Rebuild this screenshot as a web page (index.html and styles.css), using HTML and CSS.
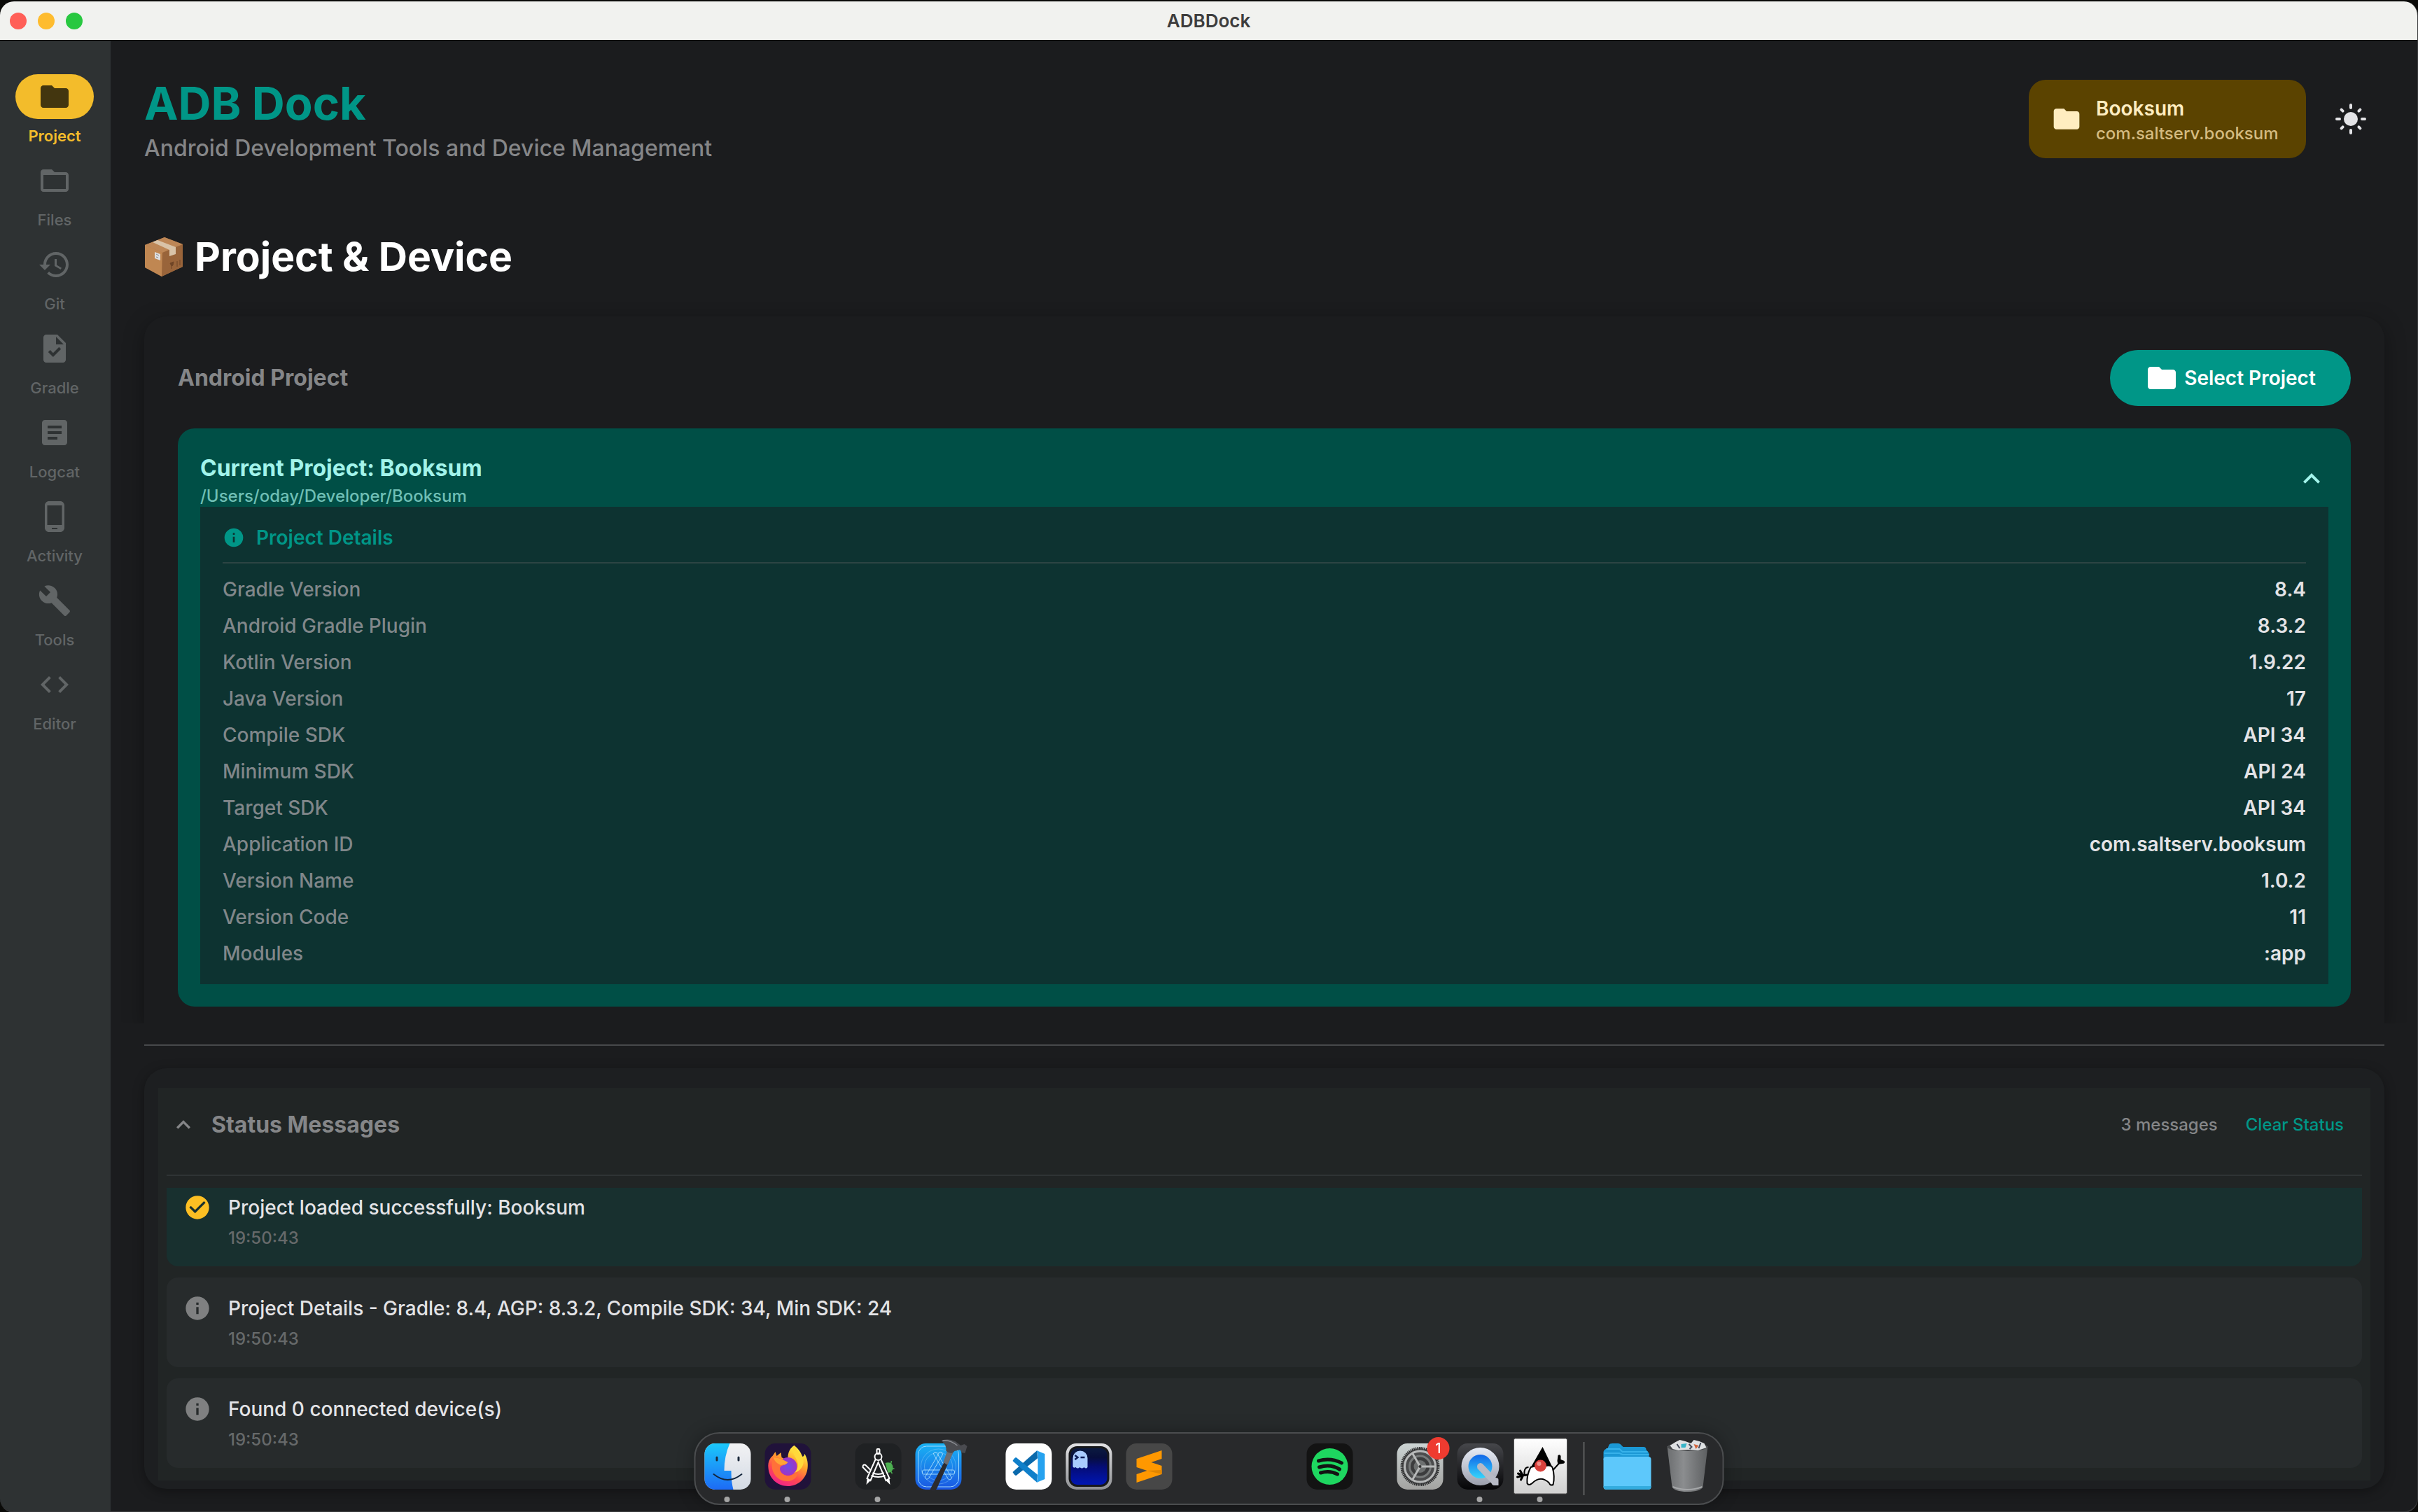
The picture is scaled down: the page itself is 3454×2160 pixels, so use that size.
FILE: index.html
```html
<!DOCTYPE html>
<html lang="en">
<head>
  <meta charset="UTF-8">
  <meta name="viewport" content="width=device-width, initial-scale=1.0">
  <title>ADBDock</title>
  <link rel="stylesheet" href="styles.css">
</head>
<body>

<svg class="sprite" aria-hidden="true">
  <symbol id="folder" viewBox="0 0 24 24"><path d="M10 4H4c-1.1 0-2 .9-2 2v12c0 1.100.9 2 2 2h16c1.100 0 2-.9 2-2V8c0-1.100-.9-2-2-2h-8l-2-2z"/></symbol>
  <symbol id="folder-open" viewBox="0 0 24 24"><path d="M20 6h-8l-2-2H4c-1.100 0-2 .9-2 2v12c0 1.100.9 2 2 2h16c1.100 0 2-.9 2-2V8c0-1.100-.9-2-2-2zm0 12H4V8h16v10z"/></symbol>
  <symbol id="history" viewBox="0 0 24 24"><path d="M13 3c-4.970 0-9 4.030-9 9H1l3.890 3.890.07.14L9 12H6c0-3.870 3.130-7 7-7s7 3.130 7 7-3.130 7-7 7c-1.930 0-3.680-.79-4.940-2.060l-1.420 1.420C8.270 19.990 10.510 21 13 21c4.970 0 9-4.030 9-9s-4.030-9-9-9zm-1 5v5l4.280 2.540.72-1.210-3.500-2.080V8H12z"/></symbol>
  <symbol id="task" viewBox="0 0 24 24"><path d="M14 2H6c-1.100 0-2 .9-2 2v16c0 1.100.89 2 1.990 2H18c1.100 0 2-.9 2-2V8l-6-6zm-3.060 16L7.400 14.460l1.410-1.410 2.120 2.120 4.240-4.240 1.410 1.410L10.940 18zM13 9V3.500L18.500 9H13z"/></symbol>
  <symbol id="article" viewBox="0 0 24 24"><path d="M19 3H5c-1.100 0-2 .9-2 2v14c0 1.100.9 2 2 2h14c1.100 0 2-.9 2-2V5c0-1.100-.9-2-2-2zm-5 14H7v-2h7v2zm3-4H7v-2h10v2zm0-4H7V7h10v2z"/></symbol>
  <symbol id="phone" viewBox="0 0 24 24"><path d="M16 1H8C6.340 1 5 2.340 5 4v16c0 1.660 1.340 3 3 3h8c1.660 0 3-1.340 3-3V4c0-1.660-1.340-3-3-3zm-2 20h-4v-1h4v1zm3.250-3H6.750V4h10.500v14z"/></symbol>
  <symbol id="build" viewBox="0 0 24 24"><path d="M22.700 19l-9.100-9.100c.9-2.300.4-5-1.500-6.900-2-2-5-2.400-7.400-1.300L9 6 6 9 1.600 4.700C.4 7.100.9 10.100 2.900 12.100c1.900 1.900 4.600 2.400 6.900 1.500l9.100 9.100c.4.4 1 .4 1.400 0l2.300-2.300c.5-.4.5-1.100.1-1.400z"/></symbol>
  <symbol id="code" viewBox="0 0 24 24"><path d="M9.400 16.600L4.800 12l4.600-4.600L8 6l-6 6 6 6 1.400-1.400zm5.200 0l4.600-4.600-4.600-4.600L16 6l6 6-6 6-1.400-1.400z"/></symbol>
  <symbol id="info" viewBox="0 0 24 24"><path d="M12 2C6.480 2 2 6.480 2 12s4.480 10 10 10 10-4.480 10-10S17.520 2 12 2zm1 15h-2v-6h2v6zm0-8h-2V7h2v2z"/></symbol>
  <symbol id="check" viewBox="0 0 24 24"><path d="M12 2C6.480 2 2 6.480 2 12s4.480 10 10 10 10-4.480 10-10S17.520 2 12 2zm-2 15l-5-5 1.410-1.410L10 14.170l7.590-7.590L19 8l-9 9z"/></symbol>
  <symbol id="expand-less" viewBox="0 0 24 24"><path d="M12 8l-6 6 1.410 1.410L12 10.830l4.590 4.580L18 14z"/></symbol>
  <symbol id="light-mode" viewBox="0 0 24 24"><circle cx="12" cy="12" r="5"/><path d="M12 2v2M12 20v2M2 12h2M20 12h2M5.300 5.300l1 1M17.700 17.700l1 1M5.300 18.700l1-1M17.700 6.300l1-1" fill="none" stroke="currentColor" stroke-width="2" stroke-linecap="round"/></symbol>
</svg>

<div class="window">
  <div class="titlebar">
    <div class="lights">
      <span class="light close"></span>
      <span class="light minimize"></span>
      <span class="light zoom"></span>
    </div>
    <span class="window-title">ADBDock</span>
  </div>

  <div class="app">
    <nav class="sidebar">
      <button class="nav-item active"><span class="pill"><svg class="icon"><use href="#folder"/></svg></span>Project</button>
      <button class="nav-item"><span class="pill"><svg class="icon"><use href="#folder-open"/></svg></span>Files</button>
      <button class="nav-item"><span class="pill"><svg class="icon"><use href="#history"/></svg></span>Git</button>
      <button class="nav-item"><span class="pill"><svg class="icon"><use href="#task"/></svg></span>Gradle</button>
      <button class="nav-item"><span class="pill"><svg class="icon"><use href="#article"/></svg></span>Logcat</button>
      <button class="nav-item"><span class="pill"><svg class="icon"><use href="#phone"/></svg></span>Activity</button>
      <button class="nav-item"><span class="pill"><svg class="icon"><use href="#build"/></svg></span>Tools</button>
      <button class="nav-item"><span class="pill"><svg class="icon"><use href="#code"/></svg></span>Editor</button>
    </nav>

    <main>
      <header class="header">
        <div>
          <h1>ADB Dock</h1>
          <p class="tagline">Android Development Tools and Device Management</p>
        </div>
        <div class="header-right">
          <div class="project-chip">
            <svg class="icon chip-icon"><use href="#folder"/></svg>
            <div>
              <p class="chip-name">Booksum</p>
              <p class="chip-id">com.saltserv.booksum</p>
            </div>
          </div>
          <button class="theme-toggle" aria-label="Toggle theme"><svg class="icon"><use href="#light-mode"/></svg></button>
        </div>
      </header>

      <h2>
        <svg class="box" viewBox="0 0 56 56" aria-hidden="true">
          <path d="M1 11 29 0 55 10 55 42 25 56 1 43z" fill="#b07a4a"/>
          <path d="M1 11 29 0 55 10 26 22z" fill="#bd8656"/>
          <path d="M1 11 26 22 25 56 1 43z" fill="#c08752"/>
          <path d="M26 22 55 10 55 42 25 56z" fill="#99643a"/>
          <path d="M12 7 19 4 45 14 45 24 36 27 36 18z" fill="#d9c3a8"/>
          <path d="M15 21 23 24 23 33 15 30z" fill="#dedede"/>
          <path d="M17 24 21 26M17 28 20 29" stroke="#8a8a8a"/>
          <path d="M37 37 42 35 41 40 39 41zM39 41V45M47 34V42M51 32V40" fill="#6f4526" stroke="#6f4526"/>
        </svg>
        Project &amp; Device
      </h2>

      <section class="card">
        <div class="card-header">
          <h3>Android Project</h3>
          <button class="select-btn"><svg class="icon"><use href="#folder"/></svg>Select Project</button>
        </div>

        <div class="current">
          <div class="current-header">
            <div>
              <h4>Current Project: Booksum</h4>
              <p class="path">/Users/oday/Developer/Booksum</p>
            </div>
            <button class="collapse" aria-label="Collapse"><svg class="icon"><use href="#expand-less"/></svg></button>
          </div>
          <div class="details">
            <h5><svg class="icon info-icon"><use href="#info"/></svg>Project Details</h5>
            <dl>
              <div><dt>Gradle Version</dt><dd>8.4</dd></div>
              <div><dt>Android Gradle Plugin</dt><dd>8.3.2</dd></div>
              <div><dt>Kotlin Version</dt><dd>1.9.22</dd></div>
              <div><dt>Java Version</dt><dd>17</dd></div>
              <div><dt>Compile SDK</dt><dd>API 34</dd></div>
              <div><dt>Minimum SDK</dt><dd>API 24</dd></div>
              <div><dt>Target SDK</dt><dd>API 34</dd></div>
              <div><dt>Application ID</dt><dd>com.saltserv.booksum</dd></div>
              <div><dt>Version Name</dt><dd>1.0.2</dd></div>
              <div><dt>Version Code</dt><dd>11</dd></div>
              <div><dt>Modules</dt><dd>:app</dd></div>
            </dl>
          </div>
        </div>
      </section>

      <hr>

      <section class="status">
        <div class="status-panel">
          <div class="status-header">
            <button class="status-toggle"><svg class="icon chevron"><use href="#expand-less"/></svg>Status Messages</button>
            <span class="count">3 messages</span>
            <button class="clear">Clear Status</button>
          </div>
          <ul class="messages">
            <li class="success">
              <svg class="icon"><use href="#check"/></svg>
              <div><p>Project loaded successfully: Booksum</p><time>19:50:43</time></div>
            </li>
            <li>
              <svg class="icon"><use href="#info"/></svg>
              <div><p>Project Details - Gradle: 8.4, AGP: 8.3.2, Compile SDK: 34, Min SDK: 24</p><time>19:50:43</time></div>
            </li>
            <li>
              <svg class="icon"><use href="#info"/></svg>
              <div><p>Found 0 connected device(s)</p><time>19:50:43</time></div>
            </li>
          </ul>
        </div>
      </section>
    </main>
  </div>
</div>

<div class="dock">
  <!-- Finder -->
  <div class="dock-item running">
    <svg viewBox="0 0 66 66">
      <defs>
        <linearGradient id="finderBlue" x2="0" y2="1"><stop stop-color="#1bc8fb"/><stop offset="1" stop-color="#1d6bf5"/></linearGradient>
        <linearGradient id="finderWhite" x2="0" y2="1"><stop stop-color="#f2f2f4"/><stop offset="1" stop-color="#d3dae4"/></linearGradient>
      </defs>
      <rect width="66" height="66" rx="15" fill="url(#finderWhite)"/>
      <path d="M36 0H15A15 15 0 0 0 0 15V51A15 15 0 0 0 15 66H41Q38 55 38 39H28Q28 18 36 0z" fill="url(#finderBlue)"/>
      <path d="M17.500 20V24M48.500 20V24" stroke="#1d2a3c" stroke-width="3" stroke-linecap="round"/>
      <path d="M13 44Q33 60 53 44" fill="none" stroke="#13263c" stroke-width="2" stroke-linecap="round"/>
    </svg>
  </div>
  <!-- Firefox -->
  <div class="dock-item running">
    <svg viewBox="0 0 66 66">
      <defs>
        <linearGradient id="fox" x1=".8" y1="0" x2=".3" y2="1"><stop offset=".1" stop-color="#fff044"/><stop offset=".4" stop-color="#ffa22b"/><stop offset=".7" stop-color="#ff4a4f"/><stop offset="1" stop-color="#f0228c"/></linearGradient>
        <radialGradient id="globe"><stop stop-color="#6c4ee8"/><stop offset="1" stop-color="#a034c4"/></radialGradient>
      </defs>
      <rect width="66" height="66" rx="15" fill="#20123a"/>
      <path d="M42 3C50 9 52 15 54 19C57 18 56 16 57 15C61 22 62 29 61 36C59 51 47 61 33 61C18 61 6 50 5 35C4 26 8 20 11 18L15 12L17 18L23 13L24 20L33 25C32 12 37 6 42 3z" fill="url(#fox)"/>
      <circle cx="33" cy="33" r="13" fill="url(#globe)"/>
      <path d="M11 20C18 19 24 22 32 27C31 31 26 31 24 32C19 35 22 42 28 45C37 49 44 43 46 36C50 46 42 54 32 54C18 54 10 42 10 31z" fill="#ff7139"/>
      <path d="M40 5C38 15 45 19 47 28C48 35 45 40 42 42C53 39 58 28 54 20C49 15 46 7 42 3z" fill="#ffd93b"/>
      <path d="M12 20C20 20 27 24 33 27C30 31 26 30 23 31C18 29 14 26 12 20z" fill="#ffa436"/>
    </svg>
  </div>
  <div class="dock-gap"></div>
  <!-- Android Studio -->
  <div class="dock-item running">
    <svg viewBox="0 0 66 66">
      <rect width="66" height="66" rx="15" fill="#1f2123"/>
      <path d="M43 28C51 25 55 31 54 36C54 39 50 42 47 42z" fill="#4caf50"/>
      <path d="M51 29 52 25M53 36H56M51 40 53 43" stroke="#4caf50" stroke-width="1.500"/>
      <g fill="none" stroke="#fff" stroke-width="2">
        <rect x="31" y="8" width="4" height="7" rx="1"/>
        <circle cx="33" cy="19" r="5"/>
        <path d="M29 23 17 50 22 53 33 27 44 53 49 50 37 23"/>
        <path d="M25 42Q33 46 41 42M23 46Q33 50 43 46"/>
        <path d="M19 42 11 34Q11 29 15 31L22 38"/>
      </g>
      <path d="M17 51 16 59 22 53zM49 51 50 59 44 53z" fill="#fff"/>
    </svg>
  </div>
  <!-- Xcode -->
  <div class="dock-item">
    <svg viewBox="0 0 66 66">
      <defs><linearGradient id="xcode" x2="0" y2="1"><stop stop-color="#19b3f4"/><stop offset="1" stop-color="#1a56e2"/></linearGradient></defs>
      <rect width="66" height="66" rx="15" fill="url(#xcode)"/>
      <g fill="none" stroke="#9fd8fb">
        <rect x="4" y="4" width="58" height="58" rx="12"/>
        <circle cx="33" cy="33" r="25" stroke-opacity=".4"/>
        <circle cx="33" cy="33" r="20" stroke-opacity=".4"/>
        <rect x="10" y="38" width="46" height="6" rx="2"/>
        <path d="M26 14Q28 11 31 14L52 49Q51 53 47 51L26 15zM38 13Q34 11 33 15L14 48Q15 53 19 50L39 16z"/>
      </g>
      <path d="M46 10 54 12 31 64Q27 71 21 66L41 27z" fill="#2b2b30"/>
      <path d="M46 10 54 13 46 31 40 27z" fill="#6b6d72"/>
      <path d="M37-4Q46-8 57-3L65 3 70 1 74 4 71 14 66 13 64 9 56 11Q52 17 44 11Q45 2 37-4z" fill="#4a4b50"/>
      <path d="M39-4Q49-6 60 3" fill="none" stroke="#8c8e94" stroke-width="1.500"/>
    </svg>
  </div>
  <div class="dock-gap"></div>
  <!-- VS Code -->
  <div class="dock-item">
    <svg viewBox="0 0 66 66">
      <rect width="66" height="66" rx="15" fill="#fff"/>
      <path d="M45 10 46 21 15 46Q13 46 10 41z" fill="#0a69ac"/>
      <path d="M45 56 46 45 15 20Q13 20 10 25z" fill="#0f7fca"/>
      <path d="M44 10 56 15V51L44 56Q46 54 46 51V15Q46 12 44 10z" fill="#26a2ef"/>
    </svg>
  </div>
  <!-- Ghostty -->
  <div class="dock-item">
    <svg viewBox="0 0 66 66">
      <defs>
        <linearGradient id="ghost" x2="0" y2="1"><stop stop-color="#0b1a40"/><stop offset=".25" stop-color="#070e3c"/><stop offset=".5" stop-color="#050c74"/><stop offset="1" stop-color="#0016b4"/></linearGradient>
        <linearGradient id="rim" x2="0" y2="1"><stop stop-color="#e2e2e4"/><stop offset="1" stop-color="#8f9194"/></linearGradient>
      </defs>
      <rect width="66" height="66" rx="15" fill="url(#rim)"/>
      <rect x="4" y="4" width="58" height="58" rx="12" fill="#17181c"/>
      <rect x="7" y="7" width="52" height="52" rx="9" fill="url(#ghost)"/>
      <path d="M10 21A10 10 0 0 1 31 21V34Q29 37 26 34Q23 37 20 34Q17 37 14 34Q11 36 10 33z" fill="#a9cbff"/>
      <path d="M13 17 17 20 13 23M21 20H27" fill="none" stroke="#0c1c58" stroke-width="2.500"/>
    </svg>
  </div>
  <!-- Sublime Text -->
  <div class="dock-item">
    <svg viewBox="0 0 66 66">
      <rect width="66" height="66" rx="15" fill="#474747"/>
      <path d="M51 10V22L36 27 51 32V44L15 56V44L30 39 15 34V22z" fill="#ff9800"/>
      <path d="M30 39 51 44 51 38z" fill="#e08500"/>
    </svg>
  </div>
  <div class="dock-gap wide"></div>
  <!-- Spotify -->
  <div class="dock-item">
    <svg viewBox="0 0 66 66">
      <rect width="66" height="66" rx="15" fill="#131313"/>
      <circle cx="33" cy="33" r="26" fill="#1ed760"/>
      <path d="M17 25Q34 20 50 28M18 34Q34 29 47 37M20 42Q33 38 44 44" fill="none" stroke="#131313" stroke-width="5" stroke-linecap="round"/>
    </svg>
  </div>
  <div class="dock-gap"></div>
  <!-- System Settings -->
  <div class="dock-item">
    <svg viewBox="0 0 66 66">
      <defs><linearGradient id="settings" x2="0" y2="1"><stop stop-color="#ccd4d4"/><stop offset="1" stop-color="#a3a3a1"/></linearGradient></defs>
      <rect width="66" height="66" rx="15" fill="url(#settings)"/>
      <circle cx="33" cy="33" r="26" fill="#58595a" stroke="#2c2d2e" stroke-width="4" stroke-dasharray="1.500 1"/>
      <circle cx="33" cy="33" r="22" fill="#4b4c4d" stroke="#b7b9b9" stroke-width="3"/>
      <circle cx="33" cy="33" r="15" fill="#3b3c3d" stroke="#777a7a" stroke-width="3"/>
      <circle cx="33" cy="33" r="9" fill="#6d7070"/>
      <path d="M33 33H55M33 33 22 14M33 33 22 52" stroke="#b7b9b9" stroke-width="3"/>
      <circle cx="33" cy="33" r="2" fill="#333"/>
    </svg>
    <span class="badge">1</span>
  </div>
  <!-- QuickTime -->
  <div class="dock-item running">
    <svg viewBox="0 0 66 66">
      <defs>
        <linearGradient id="qtBack" x2="0" y2="1"><stop stop-color="#46474b"/><stop offset="1" stop-color="#050507"/></linearGradient>
        <linearGradient id="qtRing" x2="0" y2="1"><stop stop-color="#e8ecf6"/><stop offset="1" stop-color="#9b9fac"/></linearGradient>
        <linearGradient id="qtBlue" x2="0" y2="1"><stop stop-color="#1266e8"/><stop offset="1" stop-color="#35d6fb"/></linearGradient>
      </defs>
      <rect width="66" height="66" rx="15" fill="url(#qtBack)"/>
      <circle cx="33" cy="33" r="27" fill="url(#qtRing)"/>
      <circle cx="33" cy="33" r="17" fill="url(#qtBlue)"/>
      <path d="M29 36Q27 29 33 28Q36 28 38 31L55 49Q59 49 59 52V60H52Q50 60 49 57z" fill="#b7bac5"/>
    </svg>
  </div>
  <!-- Java Duke -->
  <div class="dock-item running">
    <svg viewBox="0 0 66 66">
      <defs><linearGradient id="duke" x2="0" y2="1"><stop stop-color="#fff"/><stop offset="1" stop-color="#d0d0d0"/></linearGradient></defs>
      <rect x="-5" y="-7" width="76" height="79" rx="2" fill="url(#duke)" stroke="#555"/>
      <path d="M36 5 52 38H17z"/>
      <path d="M19 34Q30 30 34 36Q45 28 50 34Q54 48 51 59Q47 61 45 56Q33 45 21 57Q16 61 14 57Q13 46 19 34z" fill="#fff" stroke="#000" stroke-width="2"/>
      <circle cx="33" cy="32" r="8.500" fill="#d9413c"/>
      <circle cx="31" cy="29" r="3" fill="#f08f8a"/>
      <path d="M51 38 60 28M16 34Q9 34 10 45" fill="none" stroke="#000" stroke-width="2"/>
      <path d="M57 25 58 17Q61 15 62 18V23L67 25Q69 29 64 29L58 30z"/>
      <path d="M14 45 6 46M8 46 1 43M8 46 0 48M8 46 5 52M8 46 4 39" stroke="#000" stroke-width="3" stroke-linecap="round"/>
    </svg>
  </div>
  <div class="dock-separator"></div>
  <!-- Downloads -->
  <div class="dock-item">
    <svg viewBox="0 0 66 66">
      <path d="M-1 12Q0 8 5 7L7 2Q8 0 12 0H20Q23 0 25 3L27 5H56Q60 5 60 9L64 14V24H-1z" fill="#1b98d5"/>
      <path d="M3 8H22L26 12H62M0 14H22L26 16H64" fill="none" stroke="#37b2ea" stroke-width="2"/>
      <rect x="-1" y="19" width="68" height="47" rx="4" fill="#5dc8fb"/>
      <path d="M-1 61V62Q0 66 4 66H62Q66 66 67 62V61z" fill="#33acdf"/>
    </svg>
  </div>
  <!-- Trash -->
  <div class="dock-item">
    <svg viewBox="0 0 66 66">
      <defs><linearGradient id="trash"><stop stop-color="#6c6e70"/><stop offset=".4" stop-color="#8b8d8f"/><stop offset="1" stop-color="#5d5f61"/></linearGradient></defs>
      <path d="M4 4 62 4 55 62Q52 69 33 69Q14 69 11 62z" fill="url(#trash)"/>
      <ellipse cx="33" cy="5" rx="29" ry="6" fill="#4a4c4e"/>
      <path d="M8 3 16-2 22-5 30-3 38 0 42-5 50-3 57 0 60 6 48 10 34 9 20 10 12 8z" fill="#dfe1e3"/>
      <path d="M24 1 32 0 30 6 24 6z" fill="#37b4c8"/>
      <path d="M42 1 49 3 45 8z" fill="#d2643c"/>
      <path d="M35 1 39 5 36 8M18 1 22 7M52-1 49 7" fill="none" stroke="#444a58" stroke-width="2"/>
      <path d="M12 62Q33 70 54 62" fill="none" stroke="#a5a7a9" stroke-width="2"/>
    </svg>
  </div>
</div>

</body>
</html>
```
FILE: styles.css
```css
* {
  box-sizing: border-box;
}

body {
  margin: 0;
  padding-top: 2px;
  min-height: 100vh;
  display: flex;
  background: #0b0b09;
  color: #e3e3e6;
  font-family: Inter, "Noto Sans", sans-serif;
  font-size: 28px;
  font-weight: 500;
  line-height: 40px;
}

h1, h2, h3, h4, h5, p, dl, dd, ul {
  margin: 0;
  padding: 0;
}

button {
  border: none;
  padding: 0;
  background: none;
  color: inherit;
  font: inherit;
  cursor: pointer;
}

.sprite {
  position: absolute;
  width: 0;
  height: 0;
}

.icon {
  display: block;
  flex: none;
  width: 48px;
  height: 48px;
  fill: currentColor;
}

/* window */
.window {
  flex: 1;
  display: flex;
  flex-direction: column;
  overflow: hidden;
  border-right: 1px solid #38393b;
  border-bottom: 2px solid #38393b;
  border-radius: 20px;
  background: #1b1c1e;
}

.titlebar {
  display: grid;
  grid-template-columns: 1fr auto 1fr;
  align-items: center;
  height: 56px;
  padding: 0 14px;
  border-bottom: 1px solid #000;
  background: #f1f2ef;
}

.lights {
  display: flex;
  gap: 16px;
}

.light {
  width: 24px;
  height: 24px;
  border-radius: 50%;
}

.close { background: #ff5f57; }
.minimize { background: #febc2e; }
.zoom { background: #28c840; }

.window-title {
  color: #3d3d3d;
  font-size: 26px;
  font-weight: 600;
}

.app {
  flex: 1;
  display: flex;
}

/* sidebar */
.sidebar {
  flex: none;
  display: flex;
  flex-direction: column;
  gap: 16px;
  width: 158px;
  padding: 48px 2px 0 0;
  background: #2e3233;
}

.nav-item {
  display: flex;
  flex-direction: column;
  align-items: center;
  gap: 8px;
  color: #616566;
  font-size: 22px;
  line-height: 32px;
}

.pill {
  display: flex;
  align-items: center;
  justify-content: center;
  width: 112px;
  height: 64px;
  border-radius: 32px;
}

.active {
  color: #f3bc2b;
  font-weight: 600;
}

.active .pill {
  background: #f3bc2b;
  color: #43360f;
}

main {
  flex: 1;
  padding: 48px 47px 32px 48px;
}

/* header */
.header {
  display: flex;
  align-items: center;
  justify-content: space-between;
}

h1 {
  color: #009687;
  font-size: 65px;
  font-weight: 700;
  line-height: 84px;
}

.tagline {
  color: #858688;
  font-size: 32px;
  line-height: 44px;
}

.header-right {
  display: flex;
  align-items: center;
  gap: 16px;
}

.project-chip {
  display: flex;
  align-items: center;
  gap: 20px;
  min-width: 396px;
  padding: 20px 32px;
  border-radius: 24px;
  background: #5b4300;
  color: #ffedc0;
}

.chip-icon {
  width: 44px;
  height: 44px;
}

.chip-name {
  font-weight: 600;
  line-height: 42px;
}

.chip-id {
  color: #d4bb80;
  font-size: 24px;
  line-height: 30px;
}

.theme-toggle {
  padding: 24px;
}

h2 {
  display: flex;
  align-items: center;
  gap: 16px;
  margin: 96px 0 48px;
  color: #fff;
  font-size: 57px;
  font-weight: 700;
  line-height: 74px;
}

.box {
  width: 56px;
  height: 56px;
}

/* project card */
.card {
  padding: 48px 48px 24px;
  border-radius: 32px 32px 0 0;
  box-shadow: 0 8px 30px rgba(0, 0, 0, 0.35);
  clip-path: inset(-20px -47px 0 -48px);
  background: #1b1c1e;
}

.card-header {
  display: flex;
  align-items: center;
  justify-content: space-between;
  margin-bottom: 32px;
}

h3 {
  color: #858688;
  font-size: 32px;
  font-weight: 700;
}

.select-btn {
  display: flex;
  align-items: center;
  justify-content: center;
  gap: 8px;
  min-width: 344px;
  height: 80px;
  padding: 0 48px;
  border-radius: 40px;
  background: #009687;
  color: #fff;
  font-weight: 600;
}

.current {
  padding: 32px;
  border-radius: 24px;
  background: #004f46;
}

.current-header {
  display: flex;
  align-items: center;
  justify-content: space-between;
  height: 80px;
  color: #a2f4eb;
}

h4 {
  font-size: 32px;
  font-weight: 700;
  line-height: 50px;
}

.path {
  color: #6fbfb5;
  font-size: 24px;
  line-height: 30px;
}

.details {
  padding: 24px 32px;
  background: #0d3331;
}

h5 {
  display: flex;
  align-items: center;
  gap: 16px;
  padding-bottom: 15px;
  border-bottom: 2px solid #2c4443;
  color: #009687;
  font-size: 28px;
  font-weight: 600;
}

.info-icon {
  width: 32px;
  height: 32px;
}

dl {
  display: flex;
  flex-direction: column;
  gap: 12px;
  padding-top: 17px;
}

dl div {
  display: flex;
  justify-content: space-between;
}

dt {
  color: #80878a;
}

dd {
  font-weight: 600;
}

hr {
  height: 2px;
  margin: 30px 0 32px;
  border: none;
  background: #47494b;
}

/* status messages */
.status {
  padding: 28px 20px 12px;
  border-radius: 32px;
  box-shadow: 0 4px 16px rgba(0, 0, 0, 0.35);
  background: #1d1f21;
}

.status-panel {
  padding: 0 12px 18px;
  background: #212525;
}

.status-header {
  display: flex;
  align-items: center;
  gap: 40px;
  height: 126px;
  padding: 0 26px 18px 4px;
  border-bottom: 2px solid #2f3435;
  font-size: 24px;
}

.status-toggle {
  display: flex;
  align-items: center;
  gap: 20px;
  margin-right: auto;
  color: #858688;
  font-size: 32px;
  font-weight: 700;
}

.chevron {
  width: 40px;
  height: 48px;
}

.count {
  color: #858688;
}

.clear {
  color: #009687;
}

.messages {
  display: flex;
  flex-direction: column;
  gap: 16px;
  padding-top: 17px;
  list-style: none;
}

.messages li {
  display: flex;
  gap: 24px;
  padding: 24px;
  border-radius: 16px;
  background: #272b2c;
}

.messages .icon {
  width: 40px;
  height: 40px;
  color: #7f8081;
}

.messages time {
  display: block;
  margin-top: 8px;
  color: #66696a;
  font-size: 24px;
  line-height: 32px;
}

/* first row is scrolled half under the header */
.messages .success {
  padding-top: 8px;
  border-radius: 0 0 16px 16px;
  background: #18302f;
}

.messages .success .icon {
  color: #fcbf23;
}

/* dock */
.dock {
  position: fixed;
  bottom: 10px;
  left: 50%;
  transform: translateX(-50%);
  display: flex;
  height: 104px;
  padding: 0 7px 0 3px;
  border: 2px solid #4b4d4f;
  border-radius: 36px;
  box-shadow: 0 0 24px rgba(0, 0, 0, 0.3);
  background: #28292b;
}

.dock-item {
  position: relative;
  width: 86px;
  padding: 14px 10px 0;
}

.dock-item svg {
  display: block;
  width: 66px;
  height: 66px;
  overflow: visible;
}

.running::after {
  content: "";
  position: absolute;
  bottom: 2px;
  left: 38px;
  width: 8px;
  height: 8px;
  border-radius: 50%;
  background: #a5a5a5;
}

.dock-gap {
  width: 43px;
}

.dock-gap.wide {
  width: 172px;
}

.dock-separator {
  width: 2px;
  margin: 12px 18px;
  background: #5c5e5f;
}

.badge {
  position: absolute;
  top: 5px;
  right: 1px;
  width: 32px;
  height: 32px;
  border-radius: 50%;
  background: #ee3b30;
  color: #fff;
  font-size: 20px;
  line-height: 32px;
  text-align: center;
}
```
